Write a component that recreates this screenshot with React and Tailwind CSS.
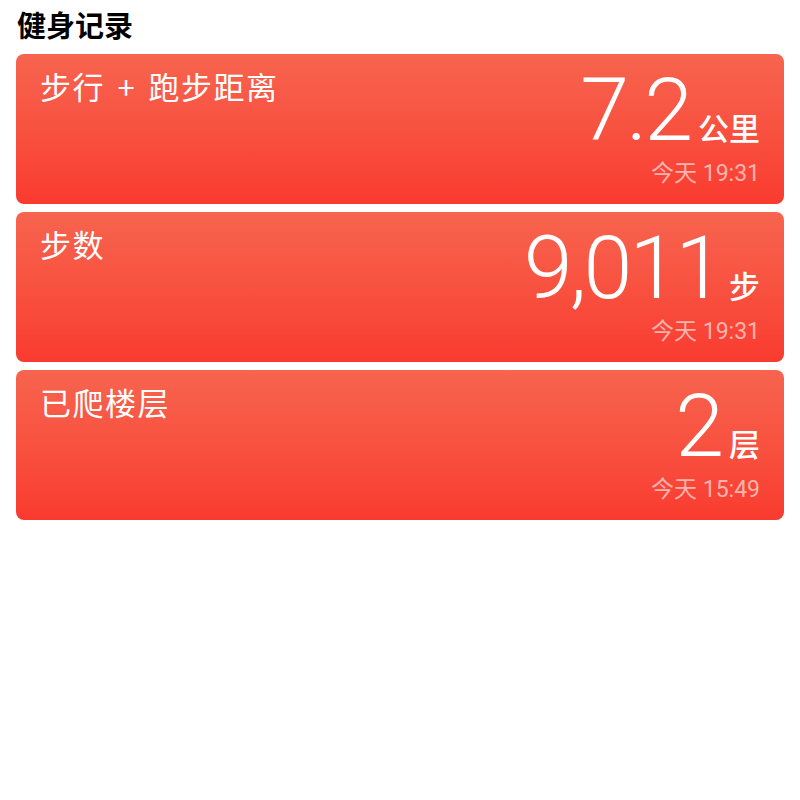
import React from 'react';

const records = [
    { label: '步行 + 跑步距离', value: '7.2', unit: '公里', time: '今天 19:31' },
    { label: '步数', value: '9,011', unit: '步', time: '今天 19:31' },
    { label: '已爬楼层', value: '2', unit: '层', time: '今天 15:49' },
];

const cjk = { fontFamily: '"Noto Sans CJK SC", "Noto Sans", sans-serif' };
const num = { fontFamily: 'Roboto, "Noto Sans CJK SC", sans-serif' };

const RecordCard = ({ record }) => (
    <div className="flex justify-between h-[150px] rounded-lg bg-gradient-to-b from-[#f7644f] to-[#f93a2f] pl-6 pr-[24px] text-white">
        <div className="pt-[14px] text-[31px] leading-[36px] tracking-[1.5px] [word-spacing:4px] whitespace-pre" style={cjk}>
            {record.label}
        </div>
        <div className="flex flex-col items-end pt-[20px]">
            <div className="flex items-baseline leading-[72px]">
                <span className="text-[88px] leading-[72px] font-light tracking-[-3px]" style={num}>{record.value}</span>
                <span className="ml-2 text-[31px] leading-[36px] font-medium" style={cjk}>{record.unit}</span>
            </div>
            <div className="mt-[16px] text-[23px] leading-none text-white/60" style={num}>
                {record.time}
            </div>
        </div>
    </div>
);

const App = () => {
    return (
        <div className="w-[800px] h-[800px] bg-white px-4 pt-[6px]">
            <h1 className="pl-[1px] text-[29px] leading-[36px] font-bold text-black" style={cjk}>健身记录</h1>
            <div className="mt-[12px] flex flex-col gap-2">
                {records.map(r => (
                    <RecordCard key={r.label} record={r} />
                ))}
            </div>
        </div>
    );
};

export default App;
